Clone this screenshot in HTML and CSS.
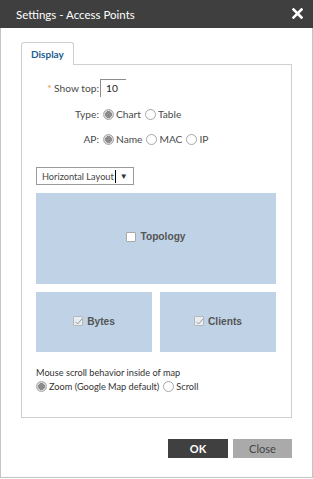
FILE: index.html
```html
<!DOCTYPE html>
<html>
<head>
<meta charset="utf-8">
<link rel="stylesheet" href="styles.css">
</head>
<body>
<div class="dialog">
  <div class="header">
    <span class="title">Settings - Access Points</span>
    <svg class="close" width="11" height="11" viewBox="0 0 11 11"><path d="M1.5 1.5 L9.5 9.5 M9.5 1.5 L1.5 9.5" stroke="#fff" stroke-width="2.6" stroke-linecap="square"/></svg>
  </div>
  <div class="body">
    <div class="tabs"><div class="tab">Display</div></div>
    <div class="panel">
      <div class="row row-top">
        <div class="lbl"><span class="req">*</span> Show top:</div>
        <div class="ctl"><div class="input">10</div></div>
      </div>
      <div class="row row-type">
        <div class="lbl">Type:</div>
        <div class="ctl">
          <span class="radio on"></span><span class="opt">Chart</span>
          <span class="radio"></span><span class="opt">Table</span>
        </div>
      </div>
      <div class="row row-ap">
        <div class="lbl">AP:</div>
        <div class="ctl">
          <span class="radio on"></span><span class="opt">Name</span>
          <span class="radio"></span><span class="opt">MAC</span>
          <span class="radio"></span><span class="opt">IP</span>
        </div>
      </div>
      <div class="select"><span class="sel-text">Horizontal Layout</span><span class="caret"></span><span class="arrow">▼</span></div>
      <div class="layout">
        <div class="cell wide"><span class="cb"></span>Topology</div>
        <div class="cell"><span class="cb chk"><svg width="9" height="9" viewBox="0 0 9 9"><path d="M1.5 4.8 L3.6 7 L8 1.8" fill="none" stroke="#9a9a9a" stroke-width="1"/></svg></span>Bytes</div>
        <div class="cell"><span class="cb chk"><svg width="9" height="9" viewBox="0 0 9 9"><path d="M1.5 4.8 L3.6 7 L8 1.8" fill="none" stroke="#9a9a9a" stroke-width="1"/></svg></span>Clients</div>
      </div>
      <div class="scroll-lbl">Mouse scroll behavior inside of map</div>
      <div class="scroll-row">
        <span class="radio on"></span><span class="opt">Zoom (Google Map default)</span>
        <span class="radio"></span><span class="opt">Scroll</span>
      </div>
    </div>
    <div class="buttons">
      <div class="btn ok">OK</div>
      <div class="btn cancel">Close</div>
    </div>
  </div>
</div>
</body>
</html>
```
FILE: styles.css
```css
* { box-sizing: border-box; }
html, body { margin: 0; padding: 0; background: #fff; }
body { font-family: Lato, "Open Sans", sans-serif; color: #4a4a4a; }

.dialog {
  width: 313px;
  height: 478px;
  border: 1px solid #c4c4c4;
  border-top: none;
  background: #fff;
}
.header {
  height: 28px;
  margin: 0 -1px;
  background: #3f3f3f;
  color: #fff;
  display: flex;
  align-items: center;
  justify-content: space-between;
  padding: 0 10px 0 16px;
}
.title { font-size: 11.5px; }
.close { margin-top: -2px; }

.body { padding: 14px 20px 0 20px; }
.tabs { display: flex; height: 22px; }
.tab {
  width: 53px;
  height: 23px;
  border: 1px solid #cfcfcf;
  border-bottom: none;
  border-radius: 3px 3px 0 0;
  background: #fff;
  color: #1d5d8e;
  font-weight: bold;
  font-size: 10px;
  padding: 5px 0 0 9px;
  position: relative;
  z-index: 1;
}
.panel {
  width: 271px;
  height: 354px;
  border: 1px solid #cfcfcf;
  padding: 14px 14px 0 14px;
}
.row { display: flex; align-items: center; font-size: 10.2px; height: 18px; }
.lbl { width: 64px; text-align: right; padding-right: 1px; white-space: nowrap; }
.req { color: #f0902a; }
.ctl { display: flex; align-items: center; }
.input {
  width: 26px;
  height: 18px;
  border-top: 1px solid #8c8c8c;
  border-left: 1px solid #8c8c8c;
  padding: 2px 0 0 5px;
  color: #222;
}
.row-type { margin-top: 8px; }
.row-ap { margin-top: 7px; }
.radio {
  display: inline-block;
  width: 11px;
  height: 11px;
  border-radius: 50%;
  border: 1px solid #a8a8a8;
  background: #fff;
  margin: 0 2px 0 3px;
  flex: none;
}
.radio.on { background: radial-gradient(circle, #8c8c8c 0 3.2px, #d6d6d6 3.6px); }
.opt { margin-right: 1px; }

.select {
  margin-top: 19px;
  width: 98px;
  height: 18px;
  border: 1px solid #9a9a9a;
  display: flex;
  align-items: center;
  font-size: 9.2px;
  padding-left: 5px;
  color: #444;
  white-space: nowrap;
}
.caret { width: 1px; height: 13px; background: #000; margin-left: 1px; }
.arrow { font-size: 8px; margin-left: 4px; color: #333; }

.layout {
  margin-top: 8px;
  display: grid;
  grid-template-columns: 116px 116px;
  grid-template-rows: 91px 60px;
  gap: 8px;
}
.cell {
  background: #c0d3e6;
  display: flex;
  align-items: center;
  justify-content: center;
  font-family: "Liberation Sans", Arial, sans-serif;
  font-weight: bold;
  font-size: 10.2px;
  color: #555;
  padding-bottom: 2px;
}
.cell.wide { grid-column: 1 / 3; padding-bottom: 4px; }
.cb {
  display: inline-block;
  width: 10px;
  height: 10px;
  border: 1px solid #a8a8a8;
  background: #fff;
  margin-right: 4px;
  flex: none;
  border-radius: 1px;
}
.cb.chk { background: #e8edf2; border-color: #b8b8b8; }
.cb svg { display: block; margin: 0; }

.scroll-lbl { margin-top: 15px; font-size: 9.2px; color: #333; }
.scroll-row { display: flex; align-items: center; font-size: 9.2px; color: #333; margin-top: 3px; margin-left: -3px; }

.buttons { display: flex; justify-content: flex-end; gap: 5px; margin-top: 21px; padding-right: 0; }
.btn {
  height: 19px;
  display: flex;
  align-items: center;
  justify-content: center;
  font-size: 11px;
}
.ok { width: 60px; background: #404040; color: #fff; font-weight: bold; }
.cancel { width: 59px; background: #aaaaaa; color: #444; }
```
